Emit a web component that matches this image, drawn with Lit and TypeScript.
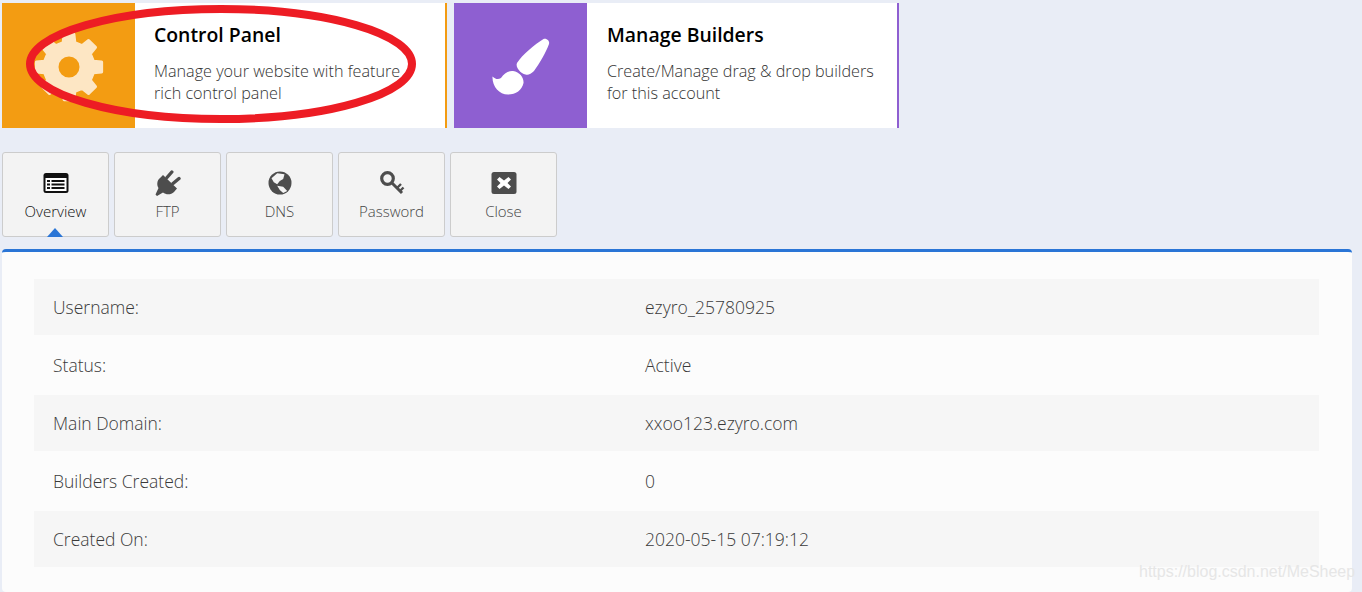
import { LitElement, html, css, svg } from "lit";
import { customElement } from "lit/decorators.js";

function gearPath(cx: number, cy: number, rOut: number, rIn: number, hole: number, teeth: number) {
  const pts: string[] = [];
  const step = (Math.PI * 2) / teeth;
  for (let i = 0; i < teeth; i++) {
    const a = i * step;
    const p = (r: number, d: number) =>
      `${(cx + r * Math.cos(a + d)).toFixed(2)} ${(cy + r * Math.sin(a + d)).toFixed(2)}`;
    pts.push(`${i === 0 ? "M" : "L"}${p(rIn, -step * 0.3)}`);
    pts.push(`L${p(rOut, -step * 0.19)}`);
    pts.push(`L${p(rOut, step * 0.19)}`);
    pts.push(`L${p(rIn, step * 0.3)}`);
  }
  return `${pts.join(" ")} Z M${cx - hole} ${cy} a${hole} ${hole} 0 1 0 ${hole * 2} 0 a${hole} ${hole} 0 1 0 ${-hole * 2} 0 Z`;
}

const icons = {
  overview: svg`<svg class="ic" viewBox="0 0 26 22" width="26" height="22"><rect x="0.5" y="1" width="25" height="20" rx="2.5" fill="#111"/><rect x="2.5" y="6" width="21" height="13" fill="#fff"/><path d="M4 8h3v2H4zM4 11.5h3v2H4zM4 15h3v2H4zM8.500 8h13v2h-13zM8.500 11.500h13v2h-13zM8.500 15h13v2h-13z" fill="#111"/></svg>`,
  ftp: svg`<svg class="ic" viewBox="0 0 26 26" width="26" height="26"><path d="M8 5L22 18.500 19 22C16 25 11 25 8 22.500L2 26 .5 24.500 3.500 18C1.500 15 2 10 5 8z" fill="#4d4d4d"/><path d="M12 7.500L16.800 2M18 13.500L24 8.500" fill="none" stroke="#4d4d4d" stroke-width="3.400" stroke-linecap="round"/></svg>`,
  dns: svg`<svg class="ic" viewBox="0 0 24 24" width="24" height="24"><circle cx="12" cy="12" r="11.500" fill="#4d4d4d"/><path d="M3.500 7.300L9.200 2.300 16.500 3.300 15.200 8 11.800 10 9.200 13.300 5.800 11.300z M9.200 14.700L15.200 15.700 19.200 20 15.200 22 11.800 19z" fill="#f3f3f3"/></svg>`,
  password: svg`<svg class="ic" viewBox="0 0 26 26" width="26" height="26"><g fill="none" stroke="#4d4d4d"><circle cx="8.500" cy="8.500" r="5.800" stroke-width="3.200"/><path d="M12.500 12.500L23 23" stroke-width="3"/><path d="M18.500 17.500l3.500-3.500M21.500 20.500l3-3" stroke-width="2.400"/></g></svg>`,
  close: svg`<svg class="ic" viewBox="0 0 26 22" width="26" height="22"><rect x="0.500" y="0" width="25" height="22" rx="2.500" fill="#4d4d4d"/><path d="M8.500 5l4.500 3.500L17.500 5 20 7.500 16.500 11 20 14.500 17.500 17 13 13.500 8.500 17 6 14.500 9.500 11 6 7.500z" fill="#fff"/></svg>`,
};

@customElement("app-root")
export class AppRoot extends LitElement {
  static styles = css`
    :host { display: block; position: relative; height: 592px; overflow: hidden; background: #e9edf6;
      font-family: "Open Sans", "Liberation Sans", sans-serif; color: #555; }
    .cards { display: flex; gap: 7px; padding: 3px 0 0 2px; }
    .card { width: 445px; height: 125px; box-sizing: border-box; display: flex; background: #fff; border-right: 2px solid; }
    .card.orange { border-color: #f39c12; }
    .card.purple { border-color: #8e5fd1; }
    .box { width: 133px; flex: none; display: flex; align-items: center; justify-content: center; }
    .orange .box { background: #f39c12; }
    .purple .box { background: #8e5fd1; }
    .body { padding: 19px 0 0 19px; }
    .purple .body { padding-left: 20px; }
    .title { font-size: 19.4px; font-weight: 600; color: #000; line-height: 26px; }
    .desc { font-size: 16.2px; font-weight: 300; line-height: 22px; color: #333; margin-top: 12px; width: 270px; }
    .tabs { display: flex; gap: 5px; padding: 24px 0 0 2px; }
    .tab { width: 107px; height: 85px; box-sizing: border-box; border: 1px solid #ccc; border-radius: 3px; background: #f3f3f3;
      position: relative; display: flex; flex-direction: column; align-items: center; font-size: 15px; font-weight: 300; color: #444; }
    .tab.active { color: #111; }
    .iw { height: 26px; margin-top: 17px; display: flex; align-items: center; justify-content: center; }
    .lbl { margin-top: 5px; line-height: 20px; }
    .caret { position: absolute; left: 44px; bottom: -1px; width: 0; height: 0; border-left: 8px solid transparent;
      border-right: 8px solid transparent; border-bottom: 9px solid #2a75d6; }
    .panel { margin: 12px 10px 0 2px; height: 343px; box-sizing: border-box; border-top: 3px solid #2a75d6; border-radius: 4px;
      background: #fcfcfc; padding: 27px 33px 0 32px; }
    .row { display: grid; grid-template-columns: 592px 1fr; align-items: center; height: 56px; margin-bottom: 2px;
      padding-left: 19px; font-size: 17.5px; font-weight: 300; color: #3a3a3a; }
    .row:nth-child(odd) { background: #f6f6f6; }
    .ring { position: absolute; left: 0; top: 0; pointer-events: none; }
    .mark { position: absolute; left: 1139px; top: 563px; font-family: "Liberation Sans", sans-serif; font-size: 16px; color: #e6e6e6; white-space: nowrap; }
  `;

  render() {
    const rows = [
      ["Username:", "ezyro_25780925"],
      ["Status:", "Active"],
      ["Main Domain:", "xxoo123.ezyro.com"],
      ["Builders Created:", "0"],
      ["Created On:", "2020-05-15 07:19:12"],
    ];
    const tabs: [string, keyof typeof icons][] = [
      ["Overview", "overview"], ["FTP", "ftp"], ["DNS", "dns"], ["Password", "password"], ["Close", "close"],
    ];
    return html`
      <div class="cards">
        <div class="card orange">
          <div class="box">
            <svg width="72" height="72" viewBox="0 0 72 72"><path fill-rule="evenodd" fill="#fde6c4" stroke="#fde6c4" stroke-width="3" stroke-linejoin="round" d="${gearPath(36, 37, 33, 25, 12, 8)}"/></svg>
          </div>
          <div class="body"><div class="title">Control Panel</div><div class="desc">Manage your website with feature rich control panel</div></div>
        </div>
        <div class="card purple">
          <div class="box">
            <svg width="60" height="60" viewBox="0 0 60 60"><path fill="#fff" d="M52.500 3C55.500 2 59 5 58 8C55 16 49 27 43 35C40 38 37 39.500 34.500 38.500C30 38 24 31 26 27C31 19 44 8 52.500 3z"/><path fill="#fff" d="M1.500 40.500C4 43 7 44 10 42C13 37 18 34.500 22 35C29 36 33 42 32.500 47C31 54 25 58.500 17 58.500C8 58.500 1 50 1.500 40.500z"/></svg>
          </div>
          <div class="body"><div class="title">Manage Builders</div><div class="desc">Create/Manage drag &amp; drop builders for this account</div></div>
        </div>
      </div>
      <div class="tabs">
        ${tabs.map(([t, k], i) => html`<div class="tab ${i === 0 ? "active" : ""}"><div class="iw">${icons[k]}</div><div class="lbl">${t}</div>${i === 0 ? html`<div class="caret"></div>` : ""}</div>`)}
      </div>
      <div class="panel">
        ${rows.map(([a, b]) => html`<div class="row"><div>${a}</div><div>${b}</div></div>`)}
      </div>
      <svg class="ring" width="440" height="130" viewBox="0 0 440 130"><ellipse cx="221" cy="64" rx="191" ry="55" fill="none" stroke="#ed1c24" stroke-width="8"/></svg>
      <div class="mark">https://blog.csdn.net/MeSheep</div>
    `;
  }
}
